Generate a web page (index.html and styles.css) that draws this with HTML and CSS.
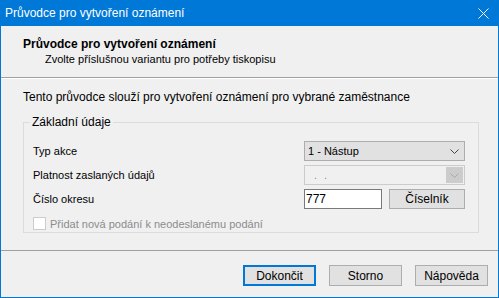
FILE: index.html
```html
<html lang="cs">
<head>
  <meta charset="utf-8">
  <title>Průvodce pro vytvoření oznámení</title>
  <link rel="stylesheet" href="styles.css">
</head>
<body>
  <div class="window">
    <div class="titlebar">
      <span class="title">Průvodce pro vytvoření oznámení</span>
      <svg class="close" width="11" height="11" viewBox="0 0 11 11">
        <path d="M0.5 0.5 L10.5 10.5 M10.5 0.5 L0.5 10.5" stroke="#fff" stroke-width="1" fill="none"/>
      </svg>
    </div>
    <div class="header">
      <div class="header-title">Průvodce pro vytvoření oznámení</div>
      <div class="header-sub">Zvolte příslušnou variantu pro potřeby tiskopisu</div>
    </div>
    <div class="content">
      <p class="intro">Tento průvodce slouží pro vytvoření oznámení pro vybrané zaměstnance</p>
      <fieldset class="group">
        <legend>Základní údaje</legend>
        <div class="row">
          <span class="label">Typ akce</span>
          <div class="combo">
            <span>1 - Nástup</span>
            <svg class="chevron" width="9" height="5" viewBox="0 0 9 5">
              <path d="M0.5 0.5 L4.5 4.5 L8.5 0.5" stroke="#444" fill="none"/>
            </svg>
          </div>
        </div>
        <div class="row">
          <span class="label">Platnost zaslaných údajů</span>
          <div class="combo disabled">
            <span class="dots">. .</span>
            <span class="drop">
              <svg width="9" height="5" viewBox="0 0 9 5">
                <path d="M0.5 0.5 L4.5 4.5 L8.5 0.5" stroke="#a8a8a8" fill="none"/>
              </svg>
            </span>
          </div>
        </div>
        <div class="row">
          <span class="label">Číslo okresu</span>
          <div class="field-pair">
            <input class="text" type="text" value="777">
            <button class="btn small">Číselník</button>
          </div>
        </div>
        <label class="check">
          <span class="box"></span>
          <span>Přidat nová podání k neodeslanému podání</span>
        </label>
      </fieldset>
    </div>
    <div class="footer">
      <button class="btn default">Dokončit</button>
      <button class="btn">Storno</button>
      <button class="btn">Nápověda</button>
    </div>
  </div>
</body>
</html>
```

FILE: styles.css
```css
:root {
  --accent: #0078d7;
  --face: #f0f0f0;
  --button: #e1e1e1;
  --button-border: #adadad;
  --muted: #8c8c8c;
}
* {
  box-sizing: border-box;
}
body {
  margin: 0;
  font-family: "Liberation Sans", Arial, sans-serif;
  font-size: 12px;
  color: #000;
  background-color: var(--face);
}
.window {
  width: 499px;
  height: 298px;
  border: 1px solid var(--accent);
  border-top: none;
  display: flex;
  flex-direction: column;
  background-color: var(--face);
}
.titlebar {
  height: 26px;
  background-color: var(--accent);
  color: #fff;
  display: flex;
  align-items: center;
  justify-content: space-between;
  padding: 0 9px 0 4px;
  font-size: 12px;
}
.header {
  height: 52px;
  padding: 11px 0 0 22px;
  border-bottom: 1px solid #a0a0a0;
  box-shadow: 0 1px 0 #fff;
}
.header-title {
  font-weight: bold;
  line-height: 15px;
}
.header-sub {
  padding-left: 22px;
  line-height: 15px;
  font-size: 11px;
}
.content {
  flex: 1;
  padding: 0 19px 0 22px;
}
.intro {
  margin: 12px 0 0;
  line-height: 15px;
}
/* segoe-ish texts in the group run narrower than the intro line */
.group {
  margin: 10px 0 0;
  border: 1px solid #dcdcdc;
  padding: 12px 13px 6px 9px;
  height: 118px;
  display: flex;
  flex-direction: column;
  gap: 4px;
  font-size: 11px;
}
.group legend {
  padding: 0 2px;
  margin-left: -3px;
  line-height: 14px;
  font-size: 12px;
}
.row {
  display: flex;
  justify-content: space-between;
  align-items: center;
  height: 20px;
}
.combo {
  width: 161px;
  height: 20px;
  border: 1px solid var(--button-border);
  background-color: var(--button);
  display: flex;
  align-items: center;
  justify-content: space-between;
  padding: 0 5px 0 3px;
}
.combo.disabled {
  border-color: #cccccc;
  background-color: var(--face);
  padding: 1px 1px 1px 9px;
}
.combo .dots {
  color: var(--muted);
  letter-spacing: 2px;
}
.combo .drop {
  width: 17px;
  height: 16px;
  background-color: #cccccc;
  display: flex;
  align-items: center;
  justify-content: center;
}
.field-pair {
  width: 161px;
  display: flex;
  justify-content: space-between;
  font-size: 12px;
}
.text {
  width: 78px;
  height: 20px;
  border: 1px solid #7a7a7a;
  padding: 0 1px;
  font: inherit;
  outline: none;
  background-color: #fff;
}
.btn {
  font: inherit;
  color: #000;
  background-color: var(--button);
  border: 1px solid var(--button-border);
  padding: 0;
  width: 73px;
  height: 21px;
}
.btn.small {
  width: 76px;
  height: 20px;
}
.btn.default {
  border: 2px solid var(--accent);
}
.check {
  display: flex;
  align-items: center;
  gap: 4px;
  height: 18px;
  margin-top: 4px;
  color: var(--muted);
}
.check .box {
  width: 13px;
  height: 13px;
  border: 1px solid #cccccc;
  background-color: #fff;
}
.footer {
  height: 47px;
  border-top: 1px solid #a0a0a0;
  display: flex;
  justify-content: flex-end;
  align-items: flex-start;
  gap: 13px;
  padding: 14px 10px 0 0;
}
```
